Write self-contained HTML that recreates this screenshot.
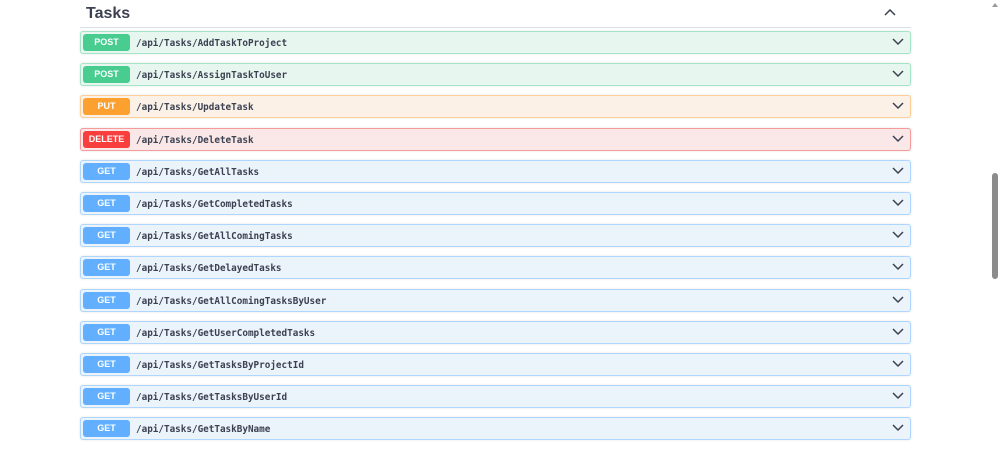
<!DOCTYPE html>
<html><head><style>
body{margin:0;width:1000px;height:451px;background:#fff;position:relative;overflow:hidden;font-family:"Liberation Sans",sans-serif}
.h{position:absolute;left:86px;top:5px;font-size:16px;font-weight:bold;color:#3b4151}
.sep{position:absolute;left:80px;width:831px;top:27px;height:1px;background:#dcdfe3}
.row{position:absolute;left:80px;width:829px;height:21px;border:1px solid;border-radius:3px;box-shadow:0 0 2px rgba(0,0,0,.12)}
.b{position:absolute;left:2px;top:2px;width:47px;height:17px;border-radius:3px;color:#fff;font-size:9px;font-weight:bold;text-align:center;line-height:17px}
.p{position:absolute;left:55px;top:1px;line-height:21px;font-family:"DejaVu Sans Mono","Liberation Mono",monospace;font-weight:bold;font-size:9.3px;color:#3b4151}
.c{position:absolute;right:6px;top:6px}
.post{background:#e8f6f0}.post .b{background:#49cc90}
.put{background:#fbf1e6}.put .b{background:#fca130}
.del{background:#fae7e7}.del .b{background:#f93e3e}
.get{background:#ebf3fb}.get .b{background:#61affe}
.post{border-color:#a4e5c7}.put{border-color:#fdcf97}.del{border-color:#f59b9b}.get{border-color:#afd6fe}
</style></head><body>
<div class="h">Tasks</div>
<svg style="position:absolute;left:884px;top:9px" width="12" height="8"><path d="M1 6 L6 1 L11 6" stroke="#3b4151" stroke-width="1.5" fill="none"/></svg>
<div class="sep"></div>
<div style="position:absolute;left:992px;top:3px;width:0;height:0;border-left:3px solid transparent;border-right:3px solid transparent;border-bottom:4px solid #999"></div>
<div style="position:absolute;left:992px;top:173px;width:6px;height:106px;background:#8c8c8c;border-radius:3px"></div>
<div id="rows"></div>
<script>
var d=[["post","POST","AddTaskToProject"],["post","POST","AssignTaskToUser"],["put","PUT","UpdateTask"],["del","DELETE","DeleteTask"],["get","GET","GetAllTasks"],["get","GET","GetCompletedTasks"],["get","GET","GetAllComingTasks"],["get","GET","GetDelayedTasks"],["get","GET","GetAllComingTasksByUser"],["get","GET","GetUserCompletedTasks"],["get","GET","GetTasksByProjectId"],["get","GET","GetTasksByUserId"],["get","GET","GetTaskByName"]];
var h="";d.forEach(function(r,i){var t=Math.round(31+i*32.2);h+='<div class="row '+r[0]+'" style="top:'+t+'px"><div class="b">'+r[1]+'</div><div class="p">/api/Tasks/'+r[2]+'</div><svg class="c" width="12" height="8"><path d="M1 1 L6 6 L11 1" stroke="#3b4151" stroke-width="1.5" fill="none"/></svg></div>'});
document.getElementById("rows").innerHTML=h;
</script>
</body></html>
